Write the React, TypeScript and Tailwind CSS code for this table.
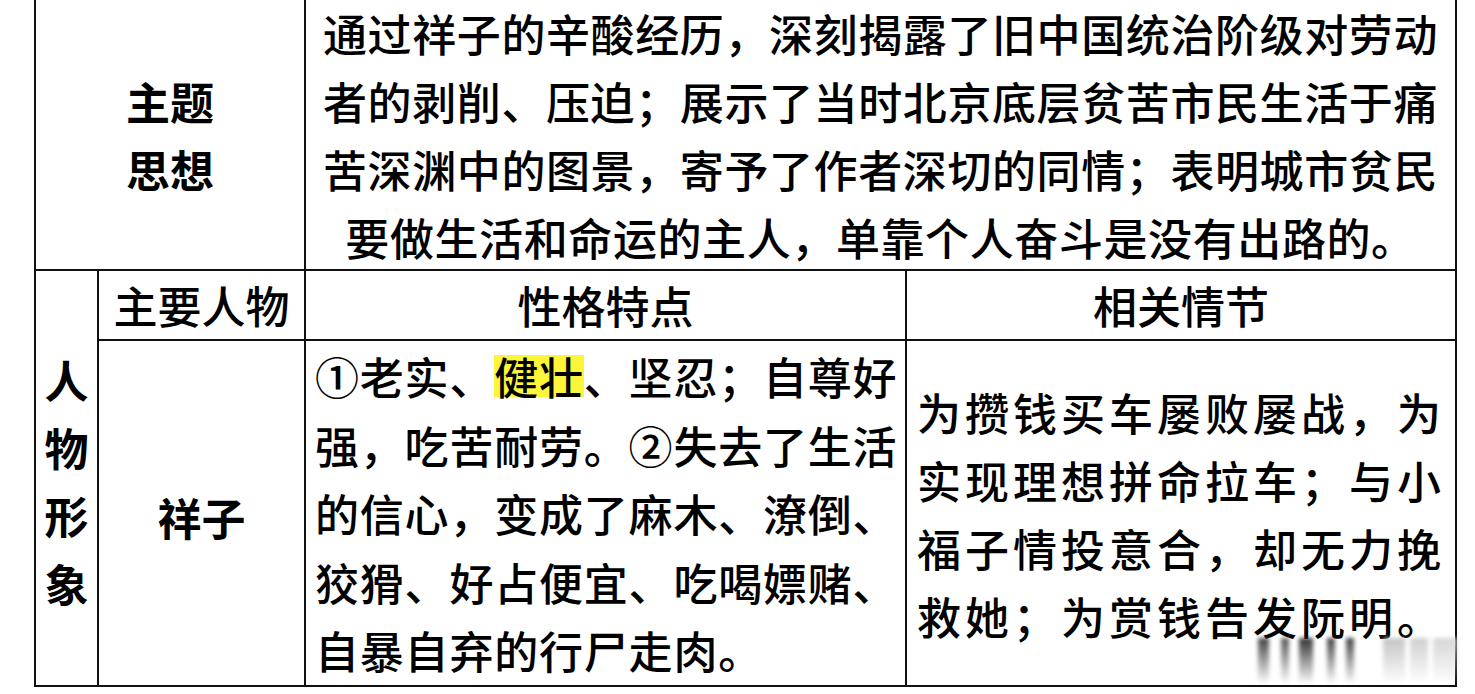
import type { ReactNode } from "react";

const FONT = "font-['Noto_Sans_CJK_SC','Noto_Sans_CJK_TC',sans-serif]";

const THEME_LINES = [
  "通过祥子的辛酸经历，深刻揭露了旧中国统治阶级对劳动",
  "者的剥削、压迫；展示了当时北京底层贫苦市民生活于痛",
  "苦深渊中的图景，寄予了作者深切的同情；表明城市贫民",
  "要做生活和命运的主人，单靠个人奋斗是没有出路的。",
];

const PLOT_LINES = [
  "为攒钱买车屡败屡战，为",
  "实现理想拼命拉车；与小",
  "福子情投意合，却无力挽",
  "救她；为赏钱告发阮明。",
];

// Trait lines; the first one carries the highlighted word.
const TRAIT_LINES: ReactNode[] = [
  <>
    ①老实、<span className="inline-block bg-[#fcf53a] leading-[42px]">健壮</span>、坚忍；自尊好
  </>,
  "强，吃苦耐劳。②失去了生活",
  "的信心，变成了麻木、潦倒、",
  "狡猾、好占便宜、吃喝嫖赌、",
  "自暴自弃的行尸走肉。",
];

// Blurry watermark streaks in the lower right corner.
const STREAKS = [
  { left: 1258, width: 11, tone: "from-[#444]" },
  { left: 1281, width: 8, tone: "from-[#555]" },
  { left: 1299, width: 14, tone: "from-[#333]" },
  { left: 1327, width: 8, tone: "from-[#444]" },
  { left: 1346, width: 8, tone: "from-[#444]" },
  { left: 1383, width: 22, tone: "from-[#c4c4c4]" },
  { left: 1410, width: 18, tone: "from-[#cfcfcf]" },
  { left: 1433, width: 24, tone: "from-[#d6d6d6]" },
];

export default function App() {
  return (
    <div className={`relative h-[694px] w-[1475px] overflow-hidden bg-white text-black ${FONT}`}>
      <div className="ml-[34px] grid w-[1423px] grid-cols-[61px_205px_599px_548px] grid-rows-[269px_68px_344px] gap-[2px] bg-[#111] px-[2px] pb-[2px]">
        {/* 主题思想 */}
        <div className="col-span-2 flex flex-col items-center justify-center bg-white text-[44px] font-bold leading-[68px]">
          <div>主题</div>
          <div>思想</div>
        </div>
        <div className="col-span-2 flex flex-col items-center justify-center bg-white text-[44px] font-medium leading-[68px] tracking-[0.6px]">
          {THEME_LINES.map((line) => (
            <div key={line} className="whitespace-nowrap">
              {line}
            </div>
          ))}
        </div>

        {/* 人物形象 spans header + body rows */}
        <div className="row-span-2 flex flex-col items-center justify-center bg-white pt-[6px] text-[44px] font-bold leading-[68px]">
          {"人物形象".split("").map((ch) => (
            <div key={ch}>{ch}</div>
          ))}
        </div>
        <div className="flex items-center justify-center bg-white text-[44px] font-medium leading-[68px]">主要人物</div>
        <div className="flex items-center justify-center bg-white text-[44px] font-medium leading-[68px]">性格特点</div>
        <div className="flex items-center justify-center bg-white text-[44px] font-medium leading-[68px]">相关情节</div>

        <div className="flex items-center justify-center bg-white pt-[8px] text-[44px] font-bold">祥子</div>
        <div className="flex flex-col justify-center bg-white pl-[9px] pt-[1px] text-[44px] font-medium leading-[68.5px] tracking-[0.8px]">
          {TRAIT_LINES.map((line, i) => (
            <div key={i} className="whitespace-nowrap">
              {line}
            </div>
          ))}
        </div>
        <div className="flex flex-col justify-center bg-white pl-[10px] pt-[2px] text-[44px] font-medium leading-[68px] tracking-[4px]">
          {PLOT_LINES.map((line) => (
            <div key={line} className="whitespace-nowrap">
              {line}
            </div>
          ))}
        </div>
      </div>

      {STREAKS.map((s) => (
        <div
          key={s.left}
          className={`absolute top-[638px] h-[46px] bg-gradient-to-b ${s.tone} to-transparent blur-[2px]`}
          style={{ left: s.left, width: s.width }}
        />
      ))}
    </div>
  );
}
